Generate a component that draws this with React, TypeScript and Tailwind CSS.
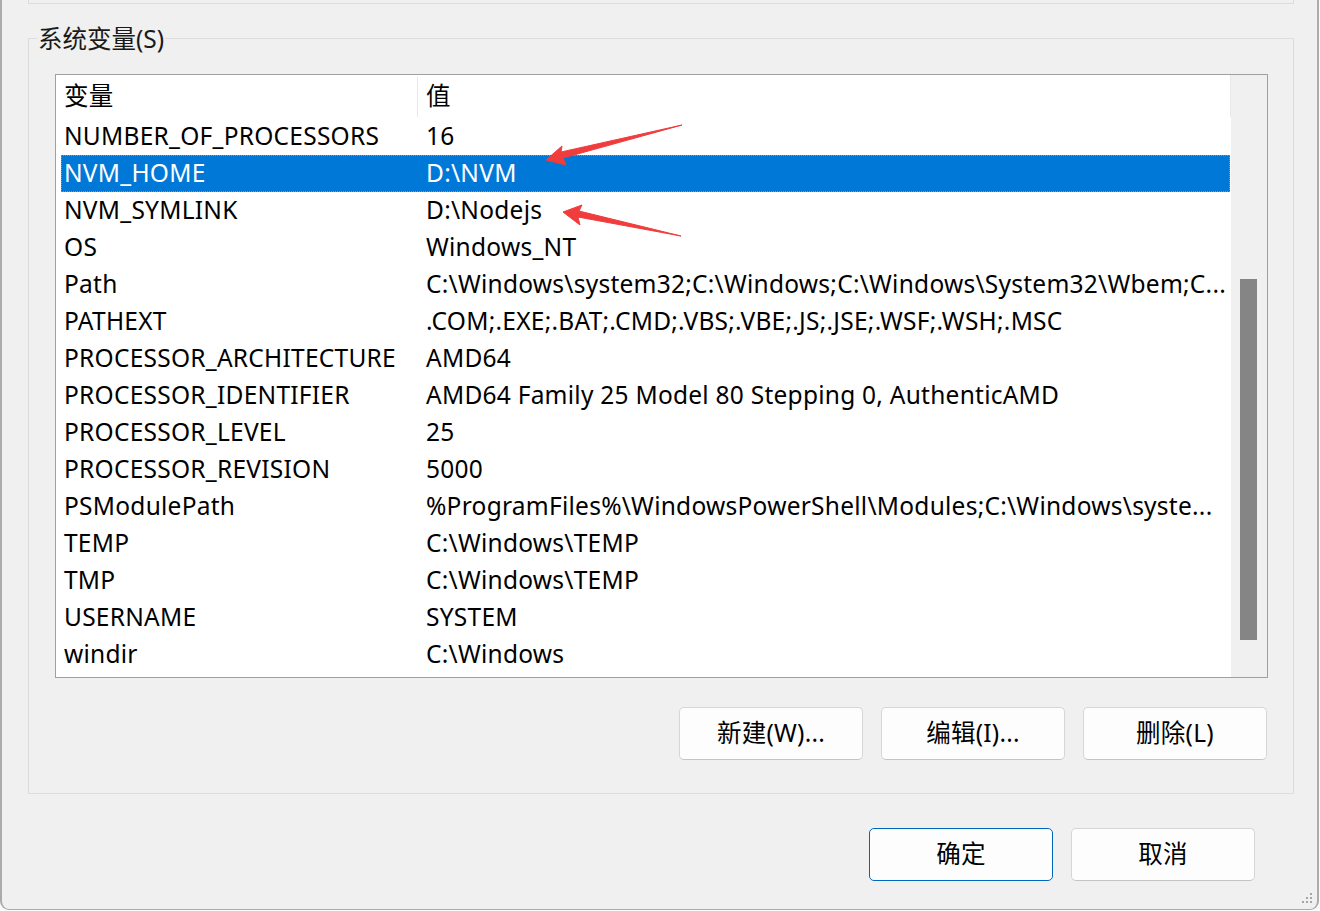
import React from 'react'

const vars: [string, string][] = [
    ['NUMBER_OF_PROCESSORS', '16'],
    ['NVM_HOME', 'D:\\NVM'],
    ['NVM_SYMLINK', 'D:\\Nodejs'],
    ['OS', 'Windows_NT'],
    ['Path', 'C:\\Windows\\system32;C:\\Windows;C:\\Windows\\System32\\Wbem;C...'],
    ['PATHEXT', '.COM;.EXE;.BAT;.CMD;.VBS;.VBE;.JS;.JSE;.WSF;.WSH;.MSC'],
    ['PROCESSOR_ARCHITECTURE', 'AMD64'],
    ['PROCESSOR_IDENTIFIER', 'AMD64 Family 25 Model 80 Stepping 0, AuthenticAMD'],
    ['PROCESSOR_LEVEL', '25'],
    ['PROCESSOR_REVISION', '5000'],
    ['PSModulePath', '%ProgramFiles%\\WindowsPowerShell\\Modules;C:\\Windows\\syste...'],
    ['TEMP', 'C:\\Windows\\TEMP'],
    ['TMP', 'C:\\Windows\\TEMP'],
    ['USERNAME', 'SYSTEM'],
    ['windir', 'C:\\Windows'],
];

const selected = 'NVM_HOME';

const WinButton = ({ label, primary }: { label: string; primary?: boolean }) => (
    <button
        className={
            primary
                ? 'flex h-[53px] w-[184px] items-center justify-center rounded-[5px] border border-[#0067c0] bg-[#fdfdfd] text-black'
                : 'flex h-[53px] w-[184px] items-center justify-center rounded-[5px] border border-[#d6d6d6] border-b-[#c4c4c4] bg-[#fdfdfd] text-black'
        }
    >
        {label}
    </button>
);

const VarList = () => (
    <div className="flex h-[604px] w-[1213px] border border-[#a0a0a0] bg-white">
        <div className="flex w-[1175px] flex-col">
            {/* header */}
            <div className="flex h-[43px] items-center">
                <div className="w-[361px] pl-[8px]">变量</div>
                <div className="h-[40px] w-px bg-[#e8e8e8]" />
                <div className="flex-1 pl-[8px]">值</div>
                <div className="h-[42px] w-px self-start bg-[#e8e8e8]" />
            </div>
            {vars.map(([name, value]) => (
                <div
                    key={name}
                    className={
                        name === selected
                            ? 'ml-[5px] flex h-[37px] w-[1169px] items-center whitespace-nowrap bg-[#0078d7] text-white outline-1 outline-dotted -outline-offset-1 outline-[#c8874a]'
                            : 'ml-[5px] flex h-[37px] w-[1169px] items-center whitespace-nowrap'
                    }
                >
                    <div className="w-[356px] pl-[3px]">{name}</div>
                    <div className="pl-[9px]">{value}</div>
                </div>
            ))}
        </div>
        {/* scrollbar */}
        <div className="flex w-[36px] flex-col bg-[#f0f0f0] pl-[9px] pt-[204px]">
            <div className="h-[361px] w-[17px] bg-[#858585]" />
        </div>
    </div>
);

export default function App() {
    return (
        <div className="relative h-[911px] w-[1320px] overflow-hidden bg-[#fafafa] font-['Noto_Sans','Noto_Sans_CJK_SC',sans-serif] text-[24.5px] leading-none tracking-[0.25px] text-black">
            <div className="flex h-[910px] w-[1319px] flex-col rounded-b-[9px] border-x-2 border-b border-[#ababab] bg-[#f0f0f0]">
                {/* tail of the user variables group */}
                <div className="ml-[26px] h-[4px] w-[1266px] border-x border-b border-[#dcdcdc]" />

                {/* system variables group */}
                <div className="relative ml-[26px] mt-[34px] flex h-[756px] w-[1266px] flex-col border border-[#dcdcdc]">
                    <span className="absolute -top-[16px] left-[8px] bg-[#f0f0f0] px-[1px] leading-[32px] tracking-normal text-[#1a1a1a]">
                        系统变量(S)
                    </span>
                    <div className="ml-[26px] mt-[35px]">
                        <VarList />
                    </div>
                    <div className="mr-[26px] mt-[29px] flex justify-end gap-[18px]">
                        <WinButton label="新建(W)..." />
                        <WinButton label="编辑(I)..." />
                        <WinButton label="删除(L)" />
                    </div>
                </div>

                <div className="mr-[62px] mt-[34px] flex justify-end gap-[18px]">
                    <WinButton label="确定" primary />
                    <WinButton label="取消" />
                </div>
            </div>

            {/* annotation arrows */}
            <svg className="pointer-events-none absolute inset-0" width="1320" height="911">
                <path d="M546,160 L562,146 L561,152 L682,125 L563,158 L566,165 Z" fill="#f03c3c" stroke="#f03c3c" strokeWidth="1" strokeLinejoin="round" />
                <path d="M563,212 L582,205 L579,211 L681,236 L578,217 L580,225 Z" fill="#f03c3c" stroke="#f03c3c" strokeWidth="1" strokeLinejoin="round" />
            </svg>

            {/* resize grip */}
            <svg className="pointer-events-none absolute bottom-[4px] right-[6px]" width="14" height="14">
                <rect x="10" y="0" width="2" height="2" fill="#a6a6a6" />
                <rect x="6" y="4" width="2" height="2" fill="#a6a6a6" />
                <rect x="10" y="4" width="2" height="2" fill="#a6a6a6" />
                <rect x="2" y="8" width="2" height="2" fill="#a6a6a6" />
                <rect x="6" y="8" width="2" height="2" fill="#a6a6a6" />
                <rect x="10" y="8" width="2" height="2" fill="#a6a6a6" />
            </svg>
        </div>
    );
}
